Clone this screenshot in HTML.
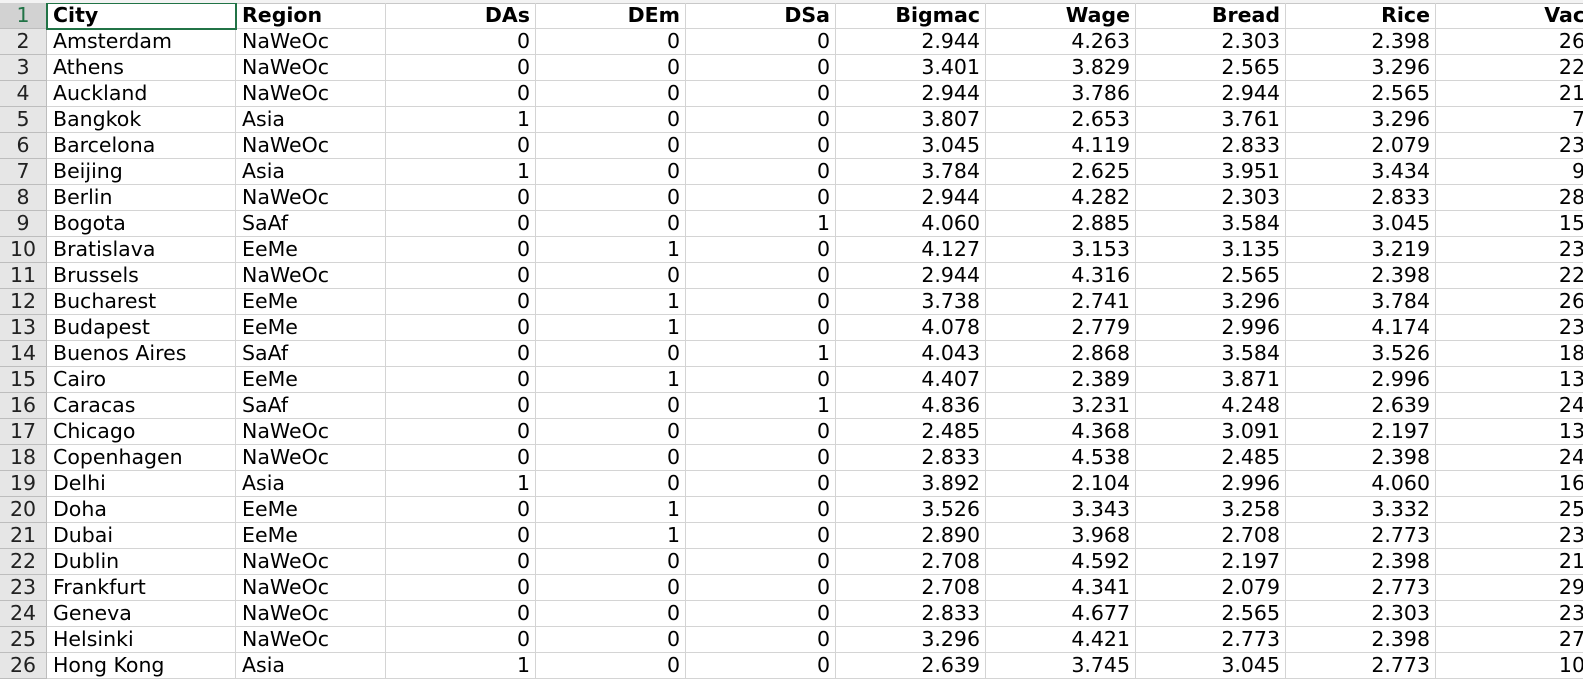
<!DOCTYPE html>
<html><head><meta charset="utf-8"><style>
html,body{margin:0;padding:0;width:1583px;height:681px;overflow:hidden;background:#fff}
.top{position:absolute;left:0;top:0;width:1583px;height:3px;background:#f3f3f3;border-bottom:1px solid #c8c8c8}
.wrap{position:absolute;left:0;top:3px;width:1583px;height:678px;overflow:hidden}
table{width:1591px;border-collapse:separate;border-spacing:0;table-layout:fixed;font-family:"DejaVu Sans","Liberation Sans",sans-serif;font-size:20.5px;color:#000}
td{height:26px;box-sizing:border-box;padding:0 5px 0 6px;border-right:1px solid #d4d4d4;border-bottom:1px solid #d4d4d4;white-space:nowrap;overflow:hidden;text-align:right;line-height:25px}
td.n{background:#e6e6e6;text-align:center;padding:0;border-color:#bdbdbd;color:#222}
td.l{text-align:left}
tr.h td{font-weight:bold}
tr.h td.n{font-weight:normal;background:#d2d2d2;color:#217346}
td.sel{outline:2px solid #217346;outline-offset:-1px}
</style></head><body>
<div class="top"></div>
<div class="wrap">
<table>
<colgroup><col style="width:47px"><col style="width:189px"><col style="width:150px"><col style="width:150px"><col style="width:150px"><col style="width:150px"><col style="width:150px"><col style="width:150px"><col style="width:150px"><col style="width:150px"><col style="width:155px"></colgroup>
<tr class="h"><td class="n">1</td><td class="l sel">City</td><td class="l">Region</td><td>DAs</td><td>DEm</td><td>DSa</td><td>Bigmac</td><td>Wage</td><td>Bread</td><td>Rice</td><td>Vac</td></tr>
<tr><td class="n">2</td><td class="l">Amsterdam</td><td class="l">NaWeOc</td><td>0</td><td>0</td><td>0</td><td>2.944</td><td>4.263</td><td>2.303</td><td>2.398</td><td>26</td></tr>
<tr><td class="n">3</td><td class="l">Athens</td><td class="l">NaWeOc</td><td>0</td><td>0</td><td>0</td><td>3.401</td><td>3.829</td><td>2.565</td><td>3.296</td><td>22</td></tr>
<tr><td class="n">4</td><td class="l">Auckland</td><td class="l">NaWeOc</td><td>0</td><td>0</td><td>0</td><td>2.944</td><td>3.786</td><td>2.944</td><td>2.565</td><td>21</td></tr>
<tr><td class="n">5</td><td class="l">Bangkok</td><td class="l">Asia</td><td>1</td><td>0</td><td>0</td><td>3.807</td><td>2.653</td><td>3.761</td><td>3.296</td><td>7</td></tr>
<tr><td class="n">6</td><td class="l">Barcelona</td><td class="l">NaWeOc</td><td>0</td><td>0</td><td>0</td><td>3.045</td><td>4.119</td><td>2.833</td><td>2.079</td><td>23</td></tr>
<tr><td class="n">7</td><td class="l">Beijing</td><td class="l">Asia</td><td>1</td><td>0</td><td>0</td><td>3.784</td><td>2.625</td><td>3.951</td><td>3.434</td><td>9</td></tr>
<tr><td class="n">8</td><td class="l">Berlin</td><td class="l">NaWeOc</td><td>0</td><td>0</td><td>0</td><td>2.944</td><td>4.282</td><td>2.303</td><td>2.833</td><td>28</td></tr>
<tr><td class="n">9</td><td class="l">Bogota</td><td class="l">SaAf</td><td>0</td><td>0</td><td>1</td><td>4.060</td><td>2.885</td><td>3.584</td><td>3.045</td><td>15</td></tr>
<tr><td class="n">10</td><td class="l">Bratislava</td><td class="l">EeMe</td><td>0</td><td>1</td><td>0</td><td>4.127</td><td>3.153</td><td>3.135</td><td>3.219</td><td>23</td></tr>
<tr><td class="n">11</td><td class="l">Brussels</td><td class="l">NaWeOc</td><td>0</td><td>0</td><td>0</td><td>2.944</td><td>4.316</td><td>2.565</td><td>2.398</td><td>22</td></tr>
<tr><td class="n">12</td><td class="l">Bucharest</td><td class="l">EeMe</td><td>0</td><td>1</td><td>0</td><td>3.738</td><td>2.741</td><td>3.296</td><td>3.784</td><td>26</td></tr>
<tr><td class="n">13</td><td class="l">Budapest</td><td class="l">EeMe</td><td>0</td><td>1</td><td>0</td><td>4.078</td><td>2.779</td><td>2.996</td><td>4.174</td><td>23</td></tr>
<tr><td class="n">14</td><td class="l">Buenos Aires</td><td class="l">SaAf</td><td>0</td><td>0</td><td>1</td><td>4.043</td><td>2.868</td><td>3.584</td><td>3.526</td><td>18</td></tr>
<tr><td class="n">15</td><td class="l">Cairo</td><td class="l">EeMe</td><td>0</td><td>1</td><td>0</td><td>4.407</td><td>2.389</td><td>3.871</td><td>2.996</td><td>13</td></tr>
<tr><td class="n">16</td><td class="l">Caracas</td><td class="l">SaAf</td><td>0</td><td>0</td><td>1</td><td>4.836</td><td>3.231</td><td>4.248</td><td>2.639</td><td>24</td></tr>
<tr><td class="n">17</td><td class="l">Chicago</td><td class="l">NaWeOc</td><td>0</td><td>0</td><td>0</td><td>2.485</td><td>4.368</td><td>3.091</td><td>2.197</td><td>13</td></tr>
<tr><td class="n">18</td><td class="l">Copenhagen</td><td class="l">NaWeOc</td><td>0</td><td>0</td><td>0</td><td>2.833</td><td>4.538</td><td>2.485</td><td>2.398</td><td>24</td></tr>
<tr><td class="n">19</td><td class="l">Delhi</td><td class="l">Asia</td><td>1</td><td>0</td><td>0</td><td>3.892</td><td>2.104</td><td>2.996</td><td>4.060</td><td>16</td></tr>
<tr><td class="n">20</td><td class="l">Doha</td><td class="l">EeMe</td><td>0</td><td>1</td><td>0</td><td>3.526</td><td>3.343</td><td>3.258</td><td>3.332</td><td>25</td></tr>
<tr><td class="n">21</td><td class="l">Dubai</td><td class="l">EeMe</td><td>0</td><td>1</td><td>0</td><td>2.890</td><td>3.968</td><td>2.708</td><td>2.773</td><td>23</td></tr>
<tr><td class="n">22</td><td class="l">Dublin</td><td class="l">NaWeOc</td><td>0</td><td>0</td><td>0</td><td>2.708</td><td>4.592</td><td>2.197</td><td>2.398</td><td>21</td></tr>
<tr><td class="n">23</td><td class="l">Frankfurt</td><td class="l">NaWeOc</td><td>0</td><td>0</td><td>0</td><td>2.708</td><td>4.341</td><td>2.079</td><td>2.773</td><td>29</td></tr>
<tr><td class="n">24</td><td class="l">Geneva</td><td class="l">NaWeOc</td><td>0</td><td>0</td><td>0</td><td>2.833</td><td>4.677</td><td>2.565</td><td>2.303</td><td>23</td></tr>
<tr><td class="n">25</td><td class="l">Helsinki</td><td class="l">NaWeOc</td><td>0</td><td>0</td><td>0</td><td>3.296</td><td>4.421</td><td>2.773</td><td>2.398</td><td>27</td></tr>
<tr><td class="n">26</td><td class="l">Hong Kong</td><td class="l">Asia</td><td>1</td><td>0</td><td>0</td><td>2.639</td><td>3.745</td><td>3.045</td><td>2.773</td><td>10</td></tr>
</table>
</div>
</body></html>
